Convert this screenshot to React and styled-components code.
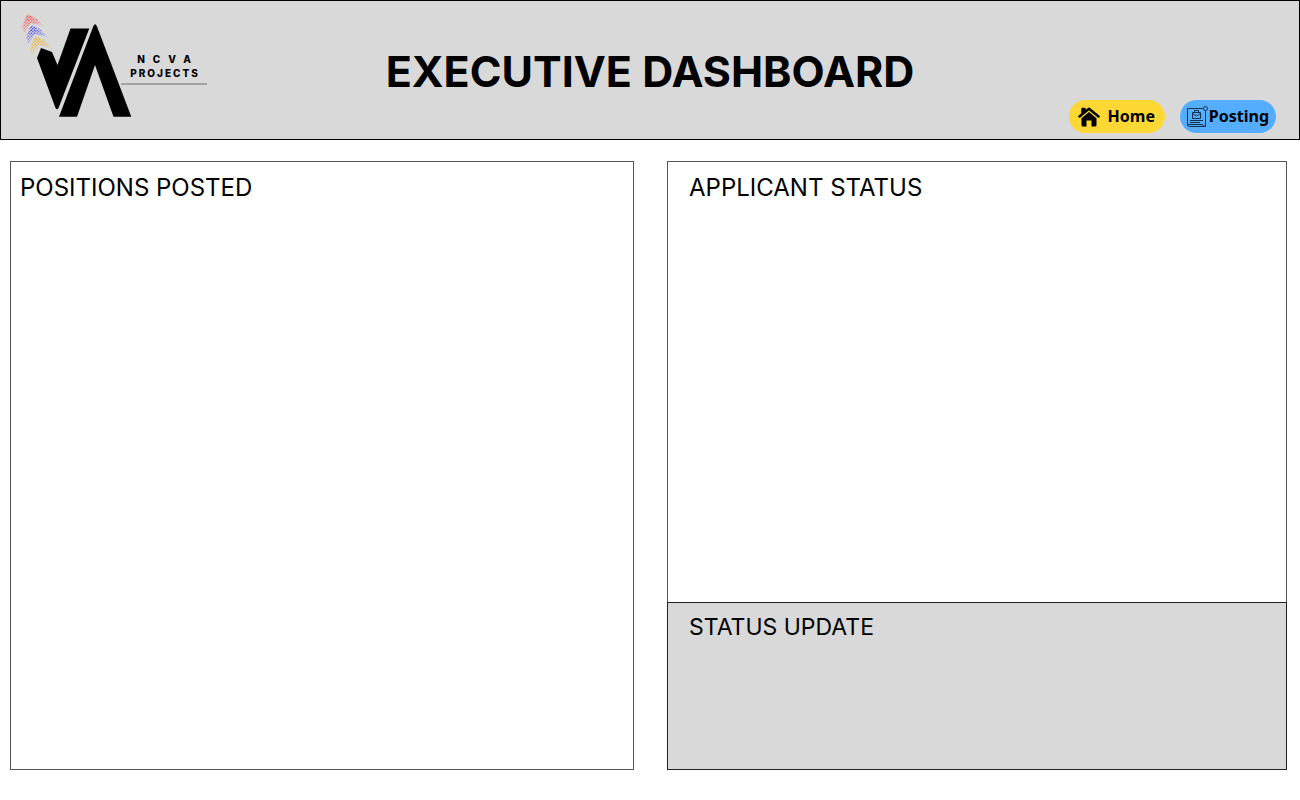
import React from "react";
import styled, { createGlobalStyle } from "styled-components";

const Global = createGlobalStyle`
  *, *::before, *::after { box-sizing: border-box; }
  body { margin: 0; background: #fff; color: #000; font-family: Inter, "Open Sans", sans-serif; }
`;

const Page = styled.div`
  min-height: 100vh;
  display: flex;
  flex-direction: column;
`;

const Header = styled.header`
  display: grid;
  grid-template-columns: 1fr auto 1fr;
  min-height: 140px;
  background: #d9d9d9;
  border: 1px solid #000;
`;

const Brand = styled.a`
  display: flex;
  align-items: flex-start;
  padding: 9px 0 0 19px;
  color: inherit;
  text-decoration: none;
`;

const Mark = styled.svg`
  flex: none;
  width: 112px;
  height: 110px;
`;

const Wordmark = styled.span`
  display: flex;
  flex-direction: column;
  align-items: center;
  width: 86px;
  height: 75px;
  margin-left: -11px;
  padding-top: 42px;
  border-bottom: 2px solid #a3a3a3;
  font-size: 10px;
  line-height: 14px;
  font-weight: 800;
  white-space: nowrap;
`;

const WordmarkLine = styled.span`
  padding-left: ${(p) => (p.$wide ? "8px" : "2px")};
  letter-spacing: ${(p) => (p.$wide ? "8px" : "2px")};
`;

const Title = styled.h1`
  margin: 0;
  padding-top: 2px;
  align-self: center;
  font-size: 43px;
  line-height: 60px;
  font-weight: 700;
`;

const Nav = styled.nav`
  display: flex;
  justify-content: flex-end;
  align-items: flex-end;
  gap: 15px;
  padding: 0 23px 6px 0;
`;

const NavButton = styled.button`
  display: flex;
  align-items: center;
  justify-content: space-between;
  width: 96px;
  height: 33px;
  padding: ${(p) => (p.$tight ? "0 7px 0 6px" : "0 10px 0 9px")};
  border: 0;
  border-radius: 17px;
  background: ${(p) => p.$color};
  color: #000;
  font: 700 16px/24px "Noto Sans", "Open Sans", sans-serif;
  cursor: pointer;
`;

const NavLabel = styled.span`
  padding-bottom: 2px;
`;

const Icon = styled.svg`
  flex: none;
  width: 22px;
  height: 22px;
`;

const Main = styled.main`
  flex: 1;
  display: grid;
  grid-template-columns: 624fr 620fr;
  gap: 33px;
  padding: 21px 13px 30px 10px;
`;

const Column = styled.div`
  display: flex;
  flex-direction: column;
`;

const Panel = styled.section`
  flex: 1;
  padding: 10px ${(p) => (p.$inset ? "21px" : "9px")};
  border: 1px solid #555;
`;

const StatusPanel = styled(Panel)`
  flex: none;
  min-height: 168px;
  margin-top: -1px;
  padding-top: 8px;
  background: #d9d9d9;
  border-color: #222;
`;

const Heading = styled.h2`
  margin: 0;
  font-size: ${(p) => (p.$small ? "23px" : "24px")};
  line-height: 32px;
  font-weight: 400;
`;

const chevrons = [
  { id: "red", color: "#ff2a2a", x: 28, y: 14 },
  { id: "blue", color: "#2a2af0", x: 32, y: 25 },
  { id: "gold", color: "#f5a800", x: 36, y: 36 },
];

function LogoMark() {
  return (
    <Mark viewBox="20 10 112 110" aria-hidden="true">
      <defs>
        <radialGradient id="fade" gradientUnits="userSpaceOnUse" cx="1" cy="4" r="18">
          <stop offset="0" stopColor="#fff" />
          <stop offset="0.3" stopColor="#fff" stopOpacity="0.7" />
          <stop offset="1" stopColor="#fff" stopOpacity="0.2" />
        </radialGradient>
        <mask id="chevronFade" maskUnits="userSpaceOnUse" x="-10" y="-2" width="30" height="24">
          <rect x="-10" y="-2" width="30" height="24" fill="url(#fade)" />
        </mask>
        {chevrons.map((c) => (
          <pattern key={c.id} id={c.id} width="3" height="3" patternUnits="userSpaceOnUse">
            <circle cx="0.8" cy="0.8" r="0.8" fill={c.color} />
            <circle cx="2.3" cy="2.3" r="0.8" fill={c.color} />
          </pattern>
        ))}
      </defs>
      {chevrons.map((c) => (
        <g key={c.id} transform={`translate(${c.x} ${c.y})`}>
          <path d="M-1 0L8 4L15 12L3 9L-4 19L-6 12Z" fill={`url(#${c.id})`} mask="url(#chevronFade)" />
        </g>
      ))}
      <path d="M37 58L41 48L52 52L57.500 65L70.500 28.500H89.300L58.500 108Q57 110.500 55.500 108Z" />
      <path d="M59 116.800L93.400 26Q95 22.500 96.800 26L131.300 116.800H113.500L95 65L77 116.800Z" />
    </Mark>
  );
}

function HomeIcon() {
  return (
    <Icon viewBox="0 0 22 22" aria-hidden="true">
      <path
        d="M4.500 8V3H6.500V6M1.500 10.500L11 2.800L20.500 10.500"
        fill="none"
        stroke="#000"
        strokeWidth="2.500"
        strokeLinecap="round"
        strokeLinejoin="round"
      />
      <path d="M3.500 12.200L11 6L18.500 12.200V19Q18.500 20.500 17 20.500H13.500V14.500H8.500V20.500H5Q3.500 20.500 3.500 19Z" />
    </Icon>
  );
}

function PostingIcon() {
  return (
    <Icon viewBox="0 0 22 22" fill="none" stroke="#143250" aria-hidden="true">
      <path d="M17 2.500H1.500V19M19.500 5V20.500H3.500Q1.500 20.500 1.500 18.500H16.500Q17 20.500 19.500 20.500" />
      <circle cx="19.500" cy="2.500" r="2" />
      <path d="M6.500 6.500H14.500V12.500H6.500ZM8.500 6.500V4.500H12.500V6.500M6.500 7.500L10.500 10L14.500 7.500M4 14.500H17M4 16.500H14" />
    </Icon>
  );
}

export default function App() {
  return (
    <Page>
      <Global />
      <Header>
        <Brand href="#">
          <LogoMark />
          <Wordmark>
            <WordmarkLine $wide>NCVA</WordmarkLine>
            <WordmarkLine>PROJECTS</WordmarkLine>
          </Wordmark>
        </Brand>
        <Title>EXECUTIVE DASHBOARD</Title>
        <Nav>
          <NavButton type="button" $color="#fdd835">
            <HomeIcon />
            <NavLabel>Home</NavLabel>
          </NavButton>
          <NavButton type="button" $color="#54adff" $tight>
            <PostingIcon />
            <NavLabel>Posting</NavLabel>
          </NavButton>
        </Nav>
      </Header>
      <Main>
        <Panel>
          <Heading>POSITIONS POSTED</Heading>
        </Panel>
        <Column>
          <Panel $inset>
            <Heading>APPLICANT STATUS</Heading>
          </Panel>
          <StatusPanel $inset>
            <Heading $small>STATUS UPDATE</Heading>
          </StatusPanel>
        </Column>
      </Main>
    </Page>
  );
}
